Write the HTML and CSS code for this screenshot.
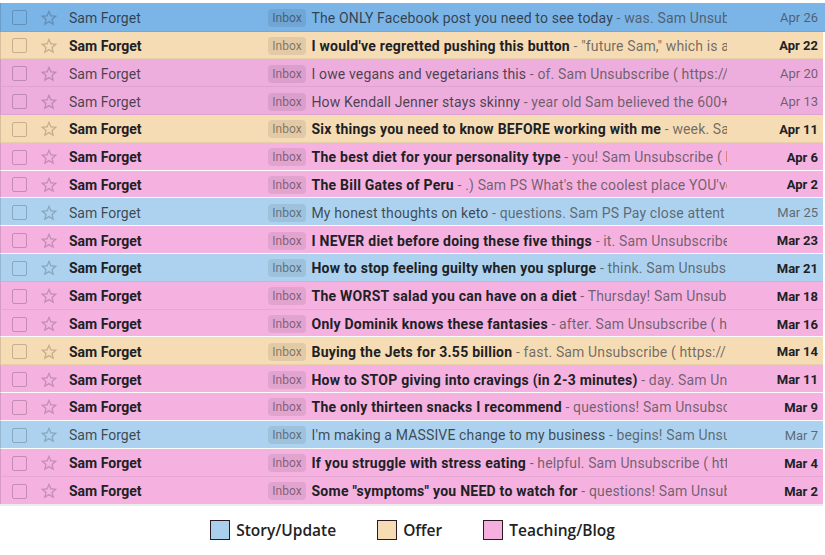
FILE: index.html
```html
<!DOCTYPE html>
<html>
<head>
<meta charset="utf-8">
<link rel="stylesheet" href="styles.css">
</head>
<body>
<svg width="0" height="0" class="defs">
  <defs>
    <symbol id="star" viewBox="0 0 24 24"><path d="M22 9.24l-7.19-.62L12 2 9.19 8.63 2 9.24l5.46 4.73L5.82 21 12 17.27 18.18 21l-1.63-7.03L22 9.24zM12 15.4l-3.76 2.27 1-4.28-3.32-2.880 4.38-.38L12 6.1l1.71 4.04 4.38.38-3.32 2.88 1 4.28L12 15.4z"/></symbol>
  </defs>
</svg>
<div class="list">
  <div class="row blue-dark read first">
    <span class="cb"><span class="box"></span></span><span class="st"><svg><use href="#star"/></svg></span>
    <span class="name">Sam Forget</span>
    <span class="main"><span class="lbl">Inbox</span> <span class="subj">The ONLY Facebook post you need to see today</span><span class="snip"> - was. Sam Unsub</span></span>
    <span class="date">Apr 26</span>
  </div>
  <div class="row beige">
    <span class="cb"><span class="box"></span></span><span class="st"><svg><use href="#star"/></svg></span>
    <span class="name">Sam Forget</span>
    <span class="main"><span class="lbl">Inbox</span> <span class="subj">I would've regretted pushing this button</span><span class="snip"> - "future Sam," which is a</span></span>
    <span class="date">Apr 22</span>
  </div>
  <div class="row pink-dark read">
    <span class="cb"><span class="box"></span></span><span class="st"><svg><use href="#star"/></svg></span>
    <span class="name">Sam Forget</span>
    <span class="main"><span class="lbl">Inbox</span> <span class="subj">I owe vegans and vegetarians this</span><span class="snip"> - of. Sam Unsubscribe ( https://</span></span>
    <span class="date">Apr 20</span>
  </div>
  <div class="row pink-dark read">
    <span class="cb"><span class="box"></span></span><span class="st"><svg><use href="#star"/></svg></span>
    <span class="name">Sam Forget</span>
    <span class="main"><span class="lbl">Inbox</span> <span class="subj">How Kendall Jenner stays skinny</span><span class="snip"> - year old Sam believed the 600+</span></span>
    <span class="date">Apr 13</span>
  </div>
  <div class="row beige">
    <span class="cb"><span class="box"></span></span><span class="st"><svg><use href="#star"/></svg></span>
    <span class="name">Sam Forget</span>
    <span class="main"><span class="lbl">Inbox</span> <span class="subj">Six things you need to know BEFORE working with me</span><span class="snip"> - week. Sa</span></span>
    <span class="date">Apr 11</span>
  </div>
  <div class="row pink white-line">
    <span class="cb"><span class="box"></span></span><span class="st"><svg><use href="#star"/></svg></span>
    <span class="name">Sam Forget</span>
    <span class="main"><span class="lbl">Inbox</span> <span class="subj">The best diet for your personality type</span><span class="snip"> - you! Sam Unsubscribe ( h</span></span>
    <span class="date">Apr 6</span>
  </div>
  <div class="row pink white-line">
    <span class="cb"><span class="box"></span></span><span class="st"><svg><use href="#star"/></svg></span>
    <span class="name">Sam Forget</span>
    <span class="main"><span class="lbl">Inbox</span> <span class="subj">The Bill Gates of Peru</span><span class="snip"> - .) Sam PS What's the coolest place YOU've</span></span>
    <span class="date">Apr 2</span>
  </div>
  <div class="row blue read white-line">
    <span class="cb"><span class="box"></span></span><span class="st"><svg><use href="#star"/></svg></span>
    <span class="name">Sam Forget</span>
    <span class="main"><span class="lbl">Inbox</span> <span class="subj">My honest thoughts on keto</span><span class="snip"> - questions. Sam PS Pay close attent</span></span>
    <span class="date">Mar 25</span>
  </div>
  <div class="row pink white-line">
    <span class="cb"><span class="box"></span></span><span class="st"><svg><use href="#star"/></svg></span>
    <span class="name">Sam Forget</span>
    <span class="main"><span class="lbl">Inbox</span> <span class="subj">I NEVER diet before doing these five things</span><span class="snip"> - it. Sam Unsubscribe</span></span>
    <span class="date">Mar 23</span>
  </div>
  <div class="row blue">
    <span class="cb"><span class="box"></span></span><span class="st"><svg><use href="#star"/></svg></span>
    <span class="name">Sam Forget</span>
    <span class="main"><span class="lbl">Inbox</span> <span class="subj">How to stop feeling guilty when you splurge</span><span class="snip"> - think. Sam Unsubs</span></span>
    <span class="date">Mar 21</span>
  </div>
  <div class="row pink">
    <span class="cb"><span class="box"></span></span><span class="st"><svg><use href="#star"/></svg></span>
    <span class="name">Sam Forget</span>
    <span class="main"><span class="lbl">Inbox</span> <span class="subj">The WORST salad you can have on a diet</span><span class="snip"> - Thursday! Sam Unsub</span></span>
    <span class="date">Mar 18</span>
  </div>
  <div class="row pink white-line">
    <span class="cb"><span class="box"></span></span><span class="st"><svg><use href="#star"/></svg></span>
    <span class="name">Sam Forget</span>
    <span class="main"><span class="lbl">Inbox</span> <span class="subj">Only Dominik knows these fantasies</span><span class="snip"> - after. Sam Unsubscribe ( h</span></span>
    <span class="date">Mar 16</span>
  </div>
  <div class="row beige">
    <span class="cb"><span class="box"></span></span><span class="st"><svg><use href="#star"/></svg></span>
    <span class="name">Sam Forget</span>
    <span class="main"><span class="lbl">Inbox</span> <span class="subj">Buying the Jets for 3.55 billion</span><span class="snip"> - fast. Sam Unsubscribe ( https://</span></span>
    <span class="date">Mar 14</span>
  </div>
  <div class="row pink white-line">
    <span class="cb"><span class="box"></span></span><span class="st"><svg><use href="#star"/></svg></span>
    <span class="name">Sam Forget</span>
    <span class="main"><span class="lbl">Inbox</span> <span class="subj">How to STOP giving into cravings (in 2-3 minutes)</span><span class="snip"> - day. Sam Uns</span></span>
    <span class="date">Mar 11</span>
  </div>
  <div class="row pink white-line">
    <span class="cb"><span class="box"></span></span><span class="st"><svg><use href="#star"/></svg></span>
    <span class="name">Sam Forget</span>
    <span class="main"><span class="lbl">Inbox</span> <span class="subj">The only thirteen snacks I recommend</span><span class="snip"> - questions! Sam Unsubsc</span></span>
    <span class="date">Mar 9</span>
  </div>
  <div class="row blue read white-line">
    <span class="cb"><span class="box"></span></span><span class="st"><svg><use href="#star"/></svg></span>
    <span class="name">Sam Forget</span>
    <span class="main"><span class="lbl">Inbox</span> <span class="subj">I'm making a MASSIVE change to my business</span><span class="snip"> - begins! Sam Unsu</span></span>
    <span class="date">Mar 7</span>
  </div>
  <div class="row pink">
    <span class="cb"><span class="box"></span></span><span class="st"><svg><use href="#star"/></svg></span>
    <span class="name">Sam Forget</span>
    <span class="main"><span class="lbl">Inbox</span> <span class="subj">If you struggle with stress eating</span><span class="snip"> - helpful. Sam Unsubscribe ( htt</span></span>
    <span class="date">Mar 4</span>
  </div>
  <div class="row pink last">
    <span class="cb"><span class="box"></span></span><span class="st"><svg><use href="#star"/></svg></span>
    <span class="name">Sam Forget</span>
    <span class="main"><span class="lbl">Inbox</span> <span class="subj">Some "symptoms" you NEED to watch for</span><span class="snip"> - questions! Sam Unsub</span></span>
    <span class="date">Mar 2</span>
  </div>
</div>
<div class="legend">
  <div class="item"><span class="sw sw-blue"></span><span class="lt">Story/Update</span></div>
  <div class="item"><span class="sw sw-beige"></span><span class="lt">Offer</span></div>
  <div class="item"><span class="sw sw-pink"></span><span class="lt">Teaching/Blog</span></div>
</div>
</body>
</html>
```
FILE: styles.css
```css
* { box-sizing: border-box; }
html, body { margin: 0; padding: 0; background: #ffffff; }
body { width: 825px; height: 555px; overflow: hidden; font-family: Roboto, "Liberation Sans", Arial, sans-serif; }
.defs { position: absolute; width: 0; height: 0; }

.list {
  margin-top: 3px;
  width: 823px;
  border-bottom: 2px solid #ececec;
}
.row {
  display: flex;
  align-items: center;
  height: 27.82px;
  padding-top: 2px;
  border-left: 1px solid rgba(0, 0, 0, 0.12);
  border-bottom: 1px solid rgba(0, 0, 0, 0.06);
  font-size: 14px;
  color: #202124;
  font-weight: 700;
  padding-left: 11px;
}
.row.first { height: 28.5px; width: 825px; }
.row.white-line { border-bottom-color: rgba(255, 255, 255, 0.95); }
.row.last { border-bottom: none; }

.blue-dark { background: #7bb4e7; }
.blue { background: #acd2ef; }
.beige { background: #f6dcb5; }
.pink { background: #f5b2e1; }
.pink-dark { background: #edaedd; }

.cb { width: 29px; flex: none; display: flex; align-items: center; }
.box {
  width: 15px; height: 15px;
  border: 1.5px solid rgba(0, 0, 0, 0.2);
  border-radius: 2px;
}
.st { width: 28px; flex: none; display: flex; align-items: center; margin-left: -2px; }
.st svg { width: 20px; height: 20px; fill: rgba(0, 0, 0, 0.2); }
.name { width: 199px; flex: none; margin-left: 2px; white-space: nowrap; }
.main {
  display: block;
  width: 459px;
  flex: none;
  overflow: hidden;
  white-space: nowrap;
}
.lbl {
  display: inline-block;
  vertical-align: 1px;
  font-size: 12px;
  font-weight: 400;
  color: rgba(0, 0, 0, 0.45);
  background: rgba(0, 0, 0, 0.08);
  border-radius: 4px;
  height: 18px;
  line-height: 18px;
  width: 38px;
  text-align: center;
  margin-right: 2px;
}
.subj { letter-spacing: 0.25px; }
.snip { font-weight: 400; color: rgba(60, 64, 67, 0.72); letter-spacing: 0.14px; }
.date {
  flex: 1;
  text-align: right;
  padding-right: 5px;
  font-size: 13px;
  white-space: nowrap;
}
.row.first .date { padding-right: 7px; }
.read .name, .read .subj, .read .date { font-weight: 400; }
.read .subj { letter-spacing: 0.14px; }
.read .name, .read .subj { color: rgba(32, 33, 36, 0.78); }
.read .date { color: rgba(60, 64, 67, 0.72); }

.legend {
  display: flex;
  justify-content: center;
  gap: 41px;
  margin-top: 14px;
  padding-left: 0;
  font-family: "Open Sans", "Liberation Sans", sans-serif;
  font-weight: 600;
  font-size: 15.5px;
  color: #222222;
}
.item { display: flex; align-items: center; gap: 6px; }
.sw {
  width: 20px; height: 20px;
  border: 1.5px solid #2b1a22;
}
.sw-blue { background: #abd0ee; }
.sw-beige { background: #f6dcb4; }
.sw-pink { background: #f5b0e0; }
.lt { line-height: 20px; }
```
